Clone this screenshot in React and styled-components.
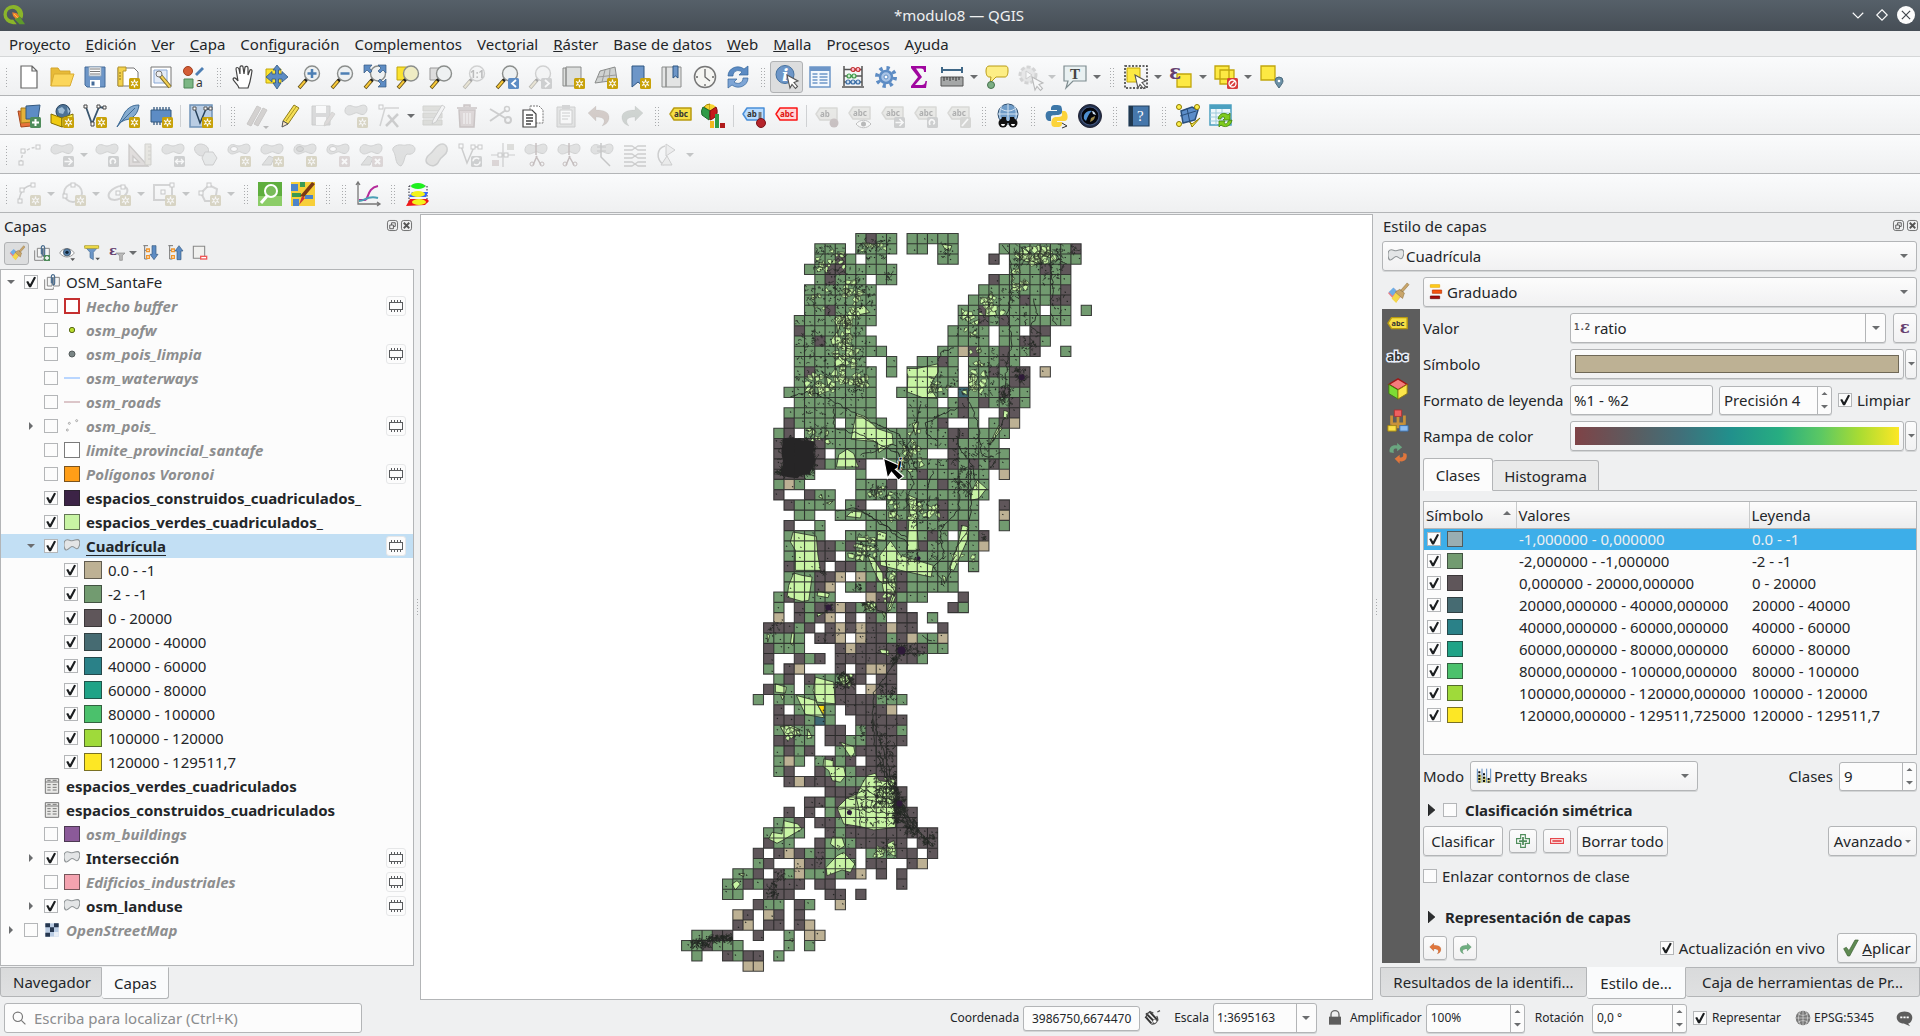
import React from "react";
import styled, { createGlobalStyle, css } from "styled-components";

/* ---------- base ---------- */

const GlobalStyle = createGlobalStyle`
  *, *::before, *::after { box-sizing: border-box; }
  body {
    margin: 0;
    background: #eff0f1;
    color: #232629;
    font: 15px/20px "Noto Sans", "Open Sans", sans-serif;
  }
  button, input, select { font: inherit; color: inherit; margin: 0; }
`;

const BORDER = "#b3b5b7";
const INK = "#4d4d4d";
const face = css`
  border: 1px solid ${BORDER};
  border-radius: 3px;
  background: linear-gradient(#fcfcfc, #f1f1f2);
  box-shadow: 0 1px 0 #d3d5d6;
`;

const Window = styled.div`
  display: flex;
  flex-direction: column;
  min-height: 100vh;
`;

/* ---------- title bar and menu ---------- */

const TitleBar = styled.header`
  display: grid;
  grid-template-columns: 1fr auto 1fr;
  align-items: center;
  height: 31px;
  padding: 0 5px 2px 3px;
  background: linear-gradient(#566069, #464e56);
  color: #eff0f1;
`;
const WindowTitle = styled.h1`
  margin: 0;
  font-size: 15px;
  font-weight: 400;
`;
const WindowButtons = styled.div`
  display: flex;
  justify-content: flex-end;
  gap: 6px;
`;
const BareButton = styled.button`
  display: inline-flex;
  align-items: center;
  justify-content: center;
  padding: 0;
  border: 0;
  background: none;
`;
const MenuBar = styled.nav`
  display: flex;
  height: 26px;
  padding-left: 1px;
  border-bottom: 1px solid #d5d7d8;
`;
const MenuItem = styled.button`
  padding: 0 7px 0 8px;
  border: 0;
  background: none;
`;

/* ---------- tool bars ---------- */

const ToolBar = styled.div`
  display: flex;
  align-items: center;
  height: 39px;
  padding-top: 2px;
  border-bottom: 1px solid ${BORDER};
  background: linear-gradient(#fafbfc, #eff0f1);
`;
const Grip = styled.span`
  width: ${(p) => (p.$first ? 12 : 16)}px;
  height: 20px;
  background: radial-gradient(circle, #a9abad 0 1px, transparent 1px) ${(p) => (p.$first ? 5 : 6)}px 0 / 3px 3px;
  background-clip: content-box;
  padding: 0 4px 0 6px;
`;
const Separator = styled.span`
  width: 1px;
  height: 22px;
  margin: 0 3px;
  background: #cfd1d3;
`;
const ToolButton = styled.button`
  display: inline-flex;
  align-items: center;
  justify-content: center;
  width: ${(p) => p.$w || 33}px;
  height: 32px;
  padding: 0;
  border: 1px solid ${(p) => (p.$on ? "#b0b2b4" : "transparent")};
  border-radius: 3px;
  background: ${(p) => (p.$on ? "#dcddde" : "none")};
  &:disabled svg { opacity: 0.36; filter: grayscale(0.7); }
`;

const Svg = ({ s = 24, children, ...rest }) => (
  <svg width={s} height={s} viewBox="0 0 24 24" fill="none" overflow="visible" aria-hidden="true" {...rest}>
    {children}
  </svg>
);

const Caret = ({ up, w = 8, c = "#6b6d6f" }) => (
  <svg width={w} height={w / 2} viewBox="0 0 8 4" aria-hidden="true">
    <path d={up ? "M0 4h8L4 0z" : "M0 0h8L4 4z"} fill={c} />
  </svg>
);

/* ---------- icon pieces ---------- */

const Star = () => (
  <g>
    <rect x="13" y="13" width="11" height="11" rx="1.5" fill="#c8a20a" />
    <path d="M18.500 14.500v8M15 16.500l7 4M22 16.500l-7 4" stroke="#fff" strokeWidth="1.300" />
    <circle cx="18.500" cy="18.500" r="1.800" fill="#c8a20a" stroke="#fff" />
  </g>
);
const Corner = ({ fill = "#8c9094", children }) => (
  <g>
    <rect x="13" y="13" width="11" height="11" rx="1.500" fill={fill} />
    {children}
  </g>
);
const Lens = ({ fill = "#eef1f2", children }) => (
  <g>
    <path d="M2 23l7-8" stroke="#5b4a13" strokeWidth="3.600" />
    <path d="M2.500 22.500l6-7" stroke="#f7c93b" strokeWidth="2" />
    <path d="M8 16l2.500-2.500" stroke="#222" strokeWidth="3" />
    <circle cx="15" cy="8.500" r="7.500" fill={fill} stroke="#8b8e8c" strokeWidth="1.400" />
    {children}
  </g>
);
const BLOB = "M2 3.500C5-.5 9 3 12 3s7-3.500 10-1c2.500 3 0 9-4 8.500-4-.5-4-2.500-7-1.500-3 1.500-6 3-8.500 1C.500 8.500.500 6 2 3.500z";
const Blob = ({ y = 0, fill = "#b9bcbb" }) => (
  <path d={BLOB} transform={`translate(0 ${y})`} fill={fill} stroke="#8a8e8c" />
);
const Tag = ({ fill = "#f6df45", stroke = "#b89a10", ink = "#333", text = "abc", y = 4 }) => (
  <g>
    <path d={`M1 ${y + 6}l4-6h17v12H5z`} fill={fill} stroke={stroke} strokeWidth="1.500" strokeLinejoin="round" />
    <text x="5" y={y + 9} fontSize="8" fontWeight="700" fontFamily="Noto Sans, sans-serif" fill={ink}>{text}</text>
  </g>
);
const Pointer = ({ x = 12, y = 11 }) => (
  <path transform={`translate(${x} ${y})`} d="M0 0l11 6-4 1.500 3.500 4-2 2-3.500-4-2 3.500z" fill="#fff" stroke="#555" strokeWidth="1.100" />
);
const Brush = () => (
  <g>
    <path d="M1 12l7-5 8 8-6 7z" fill="#e87c86" />
    <path d="M2 11l5-5 4 4-5 5z" fill="#6eaee6" />
    <path d="M5 18l5-7 5 4-5 8z" fill="#f3d84a" />
    <path d="M9 11l8 7 2-6-5-4zM15 9l7-8 2 2-7 8z" fill="#c9a56a" stroke="#8c6f3c" strokeWidth=".600" />
  </g>
);
const NodeBox = ({ x, y }) => <rect x={x} y={y} width="4" height="4" fill="#fff" stroke="#777" />;
const Undo = ({ c = "#c57b58" }) => (
  <path d="M1 9l8-7v4c8 0 14 2 13 9-1 4-4 6-7 7 4-5 3-9-6-9v4z" fill={c} stroke="#00000022" />
);
const Redo = ({ c = "#7d9f86" }) => (
  <g transform="translate(24 0) scale(-1 1)"><Undo c={c} /></g>
);
const Epsilon = ({ x = 3, y = 15, size = 19 }) => (
  <text x={x} y={y} fontSize={size} fontFamily="DejaVu Serif, serif" fontWeight="700" fill="#65406f">ε</text>
);

const I = {
  file: <path d="M4 1h11l5 5v17H4zM15 1v5h5" fill="#fff" stroke="#666" strokeWidth="1.200" />,
  open: <><path d="M1 21V3h7l2 3h10v4" fill="#e8bb38" stroke="#d3a52c" /><path d="M1 21L4 9h20l-4 12z" fill="#fbd65b" stroke="#d9ab31" /></>,
  save: <><path d="M2 2h20v20H4l-2-2z" fill="#6d96c8" stroke="#446b98" /><path d="M6 2h12v9H6z" fill="#fff" stroke="#9ab" /><path d="M7 4h10M7 6.500h10M7 9h10" stroke="#777" /><path d="M7 15h10v7H7z" fill="#fff" /><path d="M8.500 16.500h3v4h-3z" fill="#446b98" /></>,
  layout: <><path d="M2 3h16l4 4v14H2z" fill="#fff" stroke="#777" /><path d="M2 2h8v4H7v15H2z" fill="#f3d24c" stroke="#b4932a" /><path d="M3 8h2M3 11h2M3 14h2" stroke="#8d7220" /><Star /></>,
  manager: <><path d="M2 2h20v20H2z" fill="#fff" stroke="#777" /><path d="M5 5h13v13H5z" fill="#e4ecf8" stroke="#89a8d6" /><path d="M10 9l11 13" stroke="#7b6a2a" strokeWidth="4" /><path d="M12 11l9 11" stroke="#f2cf54" strokeWidth="2" /><circle cx="10" cy="9" r="3" fill="#eee" stroke="#777" /></>,
  style: <><circle cx="6" cy="6" r="4.500" fill="#d45d36" stroke="#a13f1f" /><path d="M13 9l7-7 2 2-7 7z" fill="#4d7fb4" /><path d="M2 14h9v9H2z" fill="#7cb784" stroke="#4d8557" /><text x="14" y="22" fontSize="12" fill="#333" fontFamily="Noto Sans, sans-serif">a</text></>,
  hand: <path d="M8 23c-1-4-6-7-6-9 1-2 3-1 5 2L5 4c0-2 2-2 3 0l1 5V2c1-2 3-1 3 0l1 7 1-7c1-1 3-1 3 1v7l2-5c1-1 2 0 2 1-1 5-1 9-4 17z" fill="#fff" stroke="#444" strokeWidth="1.200" />,
  pan: <><path d="M2 4h15v14H2z" fill="#fbe32f" stroke="#c1a60d" /><path d="M13 0l4 5h-2.500v4H18v-2.500l6 5.500-6 5v-3h-3.500v4H17l-4 6-4-6h2.500v-4H8v3l-6-5 6-5.500V9h3.500V5H9z" fill="#5d8cc4" stroke="#33587f" strokeWidth=".800" /></>,
  zoomIn: <Lens><path d="M15 4v9M10.500 8.500h9" stroke="#4d7fb4" strokeWidth="2.500" /></Lens>,
  zoomOut: <Lens><path d="M10.500 8.500h9" stroke="#4d7fb4" strokeWidth="2.500" /></Lens>,
  zoomFull: <><Lens /><path d="M1 0h8L6.500 3 9 6 7 8 4 5 1 8zM23 0v8l-3-3-3 3-2-2 3-3-3-3zM23 22h-8l3-3-3-3 2-2 3 3 3-3z" fill="#5d8cc4" stroke="#33587f" strokeWidth=".700" /></>,
  zoomSel: <><path d="M1 2h12v13H1z" fill="#fbe32f" stroke="#c1a60d" /><Lens fill="#efecc4" /></>,
  zoomLayer: <><path d="M1 3h12v12H1z" fill="#ddd" stroke="#999" /><Lens /></>,
  zoomNative: <Lens><text x="8" y="13" fontSize="10" fontWeight="700" fill="#555" fontFamily="Noto Sans, sans-serif">1:1</text></Lens>,
  zoomLast: <><Lens /><Corner fill="#5d8cc4"><path d="M21 15l-4 3.500 4 3.500" stroke="#fff" strokeWidth="1.800" /></Corner></>,
  zoomNext: <><Lens /><Corner><path d="M17 15l4 3.500-4 3.500" stroke="#fff" strokeWidth="1.800" /></Corner></>,
  mapView: <><path d="M2 3h3v18H2zM5 2h15v19H5z" fill="#dcdedd" stroke="#8a8c8b" /><Star /></>,
  map3d: <><path d="M6 6l15-4 2 13-22 3z" fill="#cfd2d1" stroke="#8a8c8b" /><path d="M4 12l18-2M11 5L8 17M16 4l-1 12" stroke="#999" /><Star /></>,
  bookmarkNew: <><path d="M5 1h12v21l-6-5-6 5z" fill="#6d96c8" stroke="#2e5682" /><Star /></>,
  bookmark: <><path d="M2 2h4v20H2zM6 2h15v20H6z" fill="#e3e4e4" stroke="#8a8c8b" /><path d="M13 1h5v12l-2.500-2L13 13z" fill="#6d96c8" stroke="#2e5682" /></>,
  clock: <><circle cx="12" cy="12" r="10.500" fill="#f5f5f2" stroke="#777" strokeWidth="1.500" /><path d="M12 4v8l5 4M3 12h2M19 12h2M12 19v2" stroke="#666" strokeWidth="1.300" /></>,
  refresh: <><path d="M2 11C2 3 12-1 18 4l4-3v9h-9l3-3C12 4 7 6 7 11z" fill="#5d8cc4" stroke="#33659c" strokeWidth=".700" /><path d="M22 13c0 8-10 12-16 7l-4 3v-9h9l-3 3c4 3 9 1 9-4z" fill="#7ea5d5" stroke="#33659c" strokeWidth=".700" /></>,
  identify: <><circle cx="10" cy="9.500" r="9" fill="#6d96c8" stroke="#44719f" /><text x="7" y="15.500" fontSize="17" fontWeight="700" fontStyle="italic" fontFamily="DejaVu Serif, serif" fill="#fff">i</text><Pointer x={12} y={10} /></>,
  table: <><path d="M2 2h20v20H2z" fill="#f4f8fd" stroke="#6d96c8" strokeWidth="1.500" /><path d="M2 2h20v4H2z" fill="#6d96c8" /><path d="M4.500 9h5M4.500 12h5M4.500 15h5M4.500 18h5M11.500 9h8M11.500 12h8M11.500 15h8M11.500 18h8" stroke="#6d96c8" strokeWidth="1.300" /></>,
  abacus: <><path d="M3 1v20M21 1v20M1 22h22M3 4.500h18M3 11h18M3 17h18" stroke="#555" strokeWidth="1.500" /><g strokeWidth="1.200"><path d="M10 4.500a2 2 0 104 0 2 2 0 10-4 0M15 4.500a2 2 0 104 0 2 2 0 10-4 0" fill="#fbc" stroke="#c03030" /><path d="M6 11a2 2 0 104 0 2 2 0 10-4 0M11 11a2 2 0 104 0 2 2 0 10-4 0" fill="#cec" stroke="#3f9a48" /><path d="M5 17a2 2 0 104 0 2 2 0 10-4 0M10 17a2 2 0 104 0 2 2 0 10-4 0M15 17a2 2 0 104 0 2 2 0 10-4 0" fill="#cde" stroke="#3b6fa8" /></g></>,
  gear: <><circle cx="12" cy="12" r="9" stroke="#5d8cc4" strokeWidth="4" strokeDasharray="3.200 3.900" /><circle cx="12" cy="12" r="6" fill="#a9c4e6" stroke="#5d8cc4" strokeWidth="2.500" /><circle cx="12" cy="12" r="2" fill="#fff" stroke="#5d8cc4" /></>,
  sigma: <path d="M4 1h15v6h-2c0-3-1-3.500-3-3.500H9l6 8.500-7 8h6c3 0 4-1 4.500-4H20l-1 7H4v-2l7-9L4 3z" fill="#a0069f" />,
  measure: <><path d="M2 5h20M2 2v6M22 2v6" stroke="#3f6787" strokeWidth="2" /><path d="M1 12h22v9H1z" fill="#a5a7a7" stroke="#555" /><path d="M4 12v4M7 12v3M10 12v4M13 12v3M16 12v4M19 12v3" stroke="#333" /></>,
  tips: <><path d="M4 1h16c3 0 3 2 3 5s-1 6-3 6h-9l-6 6 1-6H4c-2 0-3-3-3-6s1-5 3-5z" fill="#fdee85" stroke="#b99b14" /><circle cx="6" cy="20" r="3.500" fill="#7cae84" stroke="#47724e" /></>,
  action: <><circle cx="10" cy="10" r="8" fill="#ccc" stroke="#999" strokeWidth="3" strokeDasharray="4 2" /><path d="M8 6l6 4-6 4z" fill="#fff" stroke="#888" /><Pointer x={14} y={12} /></>,
  annotation: <><path d="M1 1h22v15H10l-7 7 2-7H1z" fill="#e9f1f2" stroke="#7e8c8f" strokeWidth="1.200" /><text x="7" y="14" fontSize="15" fontFamily="Liberation Serif, serif" fontWeight="700" fill="#444">T</text></>,
  select: <><path d="M1 1h22v22H1z" stroke="#333" strokeDasharray="2 1.500" strokeWidth="1.500" /><path d="M3 3h13v14H3z" fill="#fde943" stroke="#c1a60d" /><Pointer x={11} y={10} /></>,
  selectExpr: <><path d="M8 9h14v13H8z" fill="#fde943" stroke="#c1a60d" strokeWidth="1.300" /><Epsilon x={0} y={14} size={20} /></>,
  deselect: <><path d="M1 1h14v13H1zM6 5h14v14H6z" fill="#fde943" stroke="#c1a60d" strokeWidth="1.300" /><rect x="13" y="13" width="11" height="11" rx="1.500" fill="#d83c3c" /><circle cx="18.500" cy="18.500" r="3.500" stroke="#fff" strokeWidth="1.300" /><path d="M16 21l5-5" stroke="#fff" strokeWidth="1.300" /></>,
  selectLoc: <><path d="M2 1h14v14H2z" fill="#fde943" stroke="#c1a60d" strokeWidth="1.300" /><path d="M20 23c-2-3-4-5-4-7a4 4 0 018 0c0 2-2 4-4 7z" fill="#6b90a6" stroke="#4c6b7d" /><circle cx="20" cy="16" r="1.300" fill="#fff" /></>,

  addLayer: <><path d="M1 7l11 1 2 14-10 1z" fill="#e8743b" stroke="#a5441b" /><path d="M4 4h12v14l-12 1z" fill="#e5b13a" stroke="#a57a1b" /><path d="M9 2l14-1-2 14H9z" fill="#5d8cc4" stroke="#33587f" /><Corner fill="#4f8c5b"><path d="M18.500 15v7M15 18.500h7" stroke="#fff" strokeWidth="2" /></Corner></>,
  geopackage: <><circle cx="13" cy="7.500" r="7" fill="#4d7296" stroke="#2b4661" /><path d="M8 5l4-2 3 3-2 4-4-1zM17 3l3 4-2 3z" fill="#9dbcd6" /><path d="M1 10l11 4v9L1 19z" fill="#f0cb12" stroke="#856f00" /><path d="M12 14l11-4v9l-11 4z" fill="#fdf04c" stroke="#856f00" /><Star /></>,
  shape: <><path d="M3 3l6 17L16 3l6 1" stroke="#39556e" strokeWidth="1.800" /><path d="M1 1h3v3H1zM14 1h3v3h-3zM20 2h3v3h-3zM8 18h3v4H8z" fill="#fff" stroke="#444" /><Star /></>,
  feather: <><path d="M1 23L9 8c4-5 8-7 14-7-1 9-6 14-14 15l-4 2z" fill="#85abcf" stroke="#3e6b96" /><path d="M3 20L19 4" stroke="#3e6b96" /><Star /></>,
  memory: <><path d="M5 3v18M8 3v18M11 3v18M14 3v18M17 3v18M20 3v18" stroke="#33587f" strokeWidth="1.300" /><path d="M2 6h20v12H2z" fill="#5d8cc4" stroke="#33587f" /><Star /></>,
  virtual: <><path d="M1 1h22v22H1z" fill="#b9cde4" stroke="#6f93b8" strokeWidth="1.500" /><path d="M6 5l5 14 6-14h4" stroke="#27425c" strokeWidth="1.500" /><path d="M4 3h3v3H4zM15 3h3v3h-3zM20 3h3v3h-3z" fill="#fff" stroke="#555" /><Star /></>,
  pencils: <><path d="M2 20L12 2l4 2L6 22zM9 20l9-16 4 2-9 16z" fill="#a98f80" stroke="#8a7568" /><path d="M18 22h6l-3 3z" fill="#555" /></>,
  pencil: <><path d="M5 17L16 1l5 3L10 20z" fill="#f5df57" stroke="#8f7d1c" /><path d="M5 17l-1 6 6-3z" fill="#f7e5c8" stroke="#555" /><path d="M8 17L18 3" stroke="#b09c22" /></>,
  saveEdit: <><path d="M1 2h18v19H1z" fill="#aaa" stroke="#888" /><path d="M5 2h10v7H5zM5 13h10v8H5z" fill="#fff" /><path d="M14 18l7-10 3 2-7 10-4 2z" fill="#c9a9a0" stroke="#998" /></>,
  addPoly: <><Blob /><Star /></>,
  vertex: <><path d="M3 22L8 4h14" stroke="#999" strokeWidth="1.500" /><NodeBox x={2} y={1} /><path d="M9 22l12-12M11 11l10 12" stroke="#888" strokeWidth="2.500" /></>,
  attrs: <><path d="M1 2h19v5H1zM1 9h19v5H1zM1 16h19v5H1z" fill="#b6b79b" stroke="#99997f" /><path d="M11 16L20 1l3 2-9 15-4 2z" fill="#eee" stroke="#888" /></>,
  trash: <><path d="M2 4h20M4 6h16l-1 17H5zM9 3V1h6v2" fill="#d49a9a" stroke="#a06868" strokeWidth="1.500" /><path d="M9 9v11M12 9v11M15 9v11" stroke="#fff" /></>,
  cut: <><path d="M2 5l15 9M2 17L18 6" stroke="#888" strokeWidth="2" /><circle cx="20" cy="16" r="3" stroke="#888" strokeWidth="2" /><circle cx="19" cy="5" r="2.500" stroke="#888" strokeWidth="1.500" /></>,
  copy: <><path d="M9 2h9l4 4v13H9z" fill="#fff" stroke="#777" strokeDasharray="2 1" /><path d="M2 6h9l4 4v13H2z" fill="#fff" stroke="#444" strokeWidth="1.200" /><path d="M5 11h7M5 14h7M5 17h7M5 20h5" stroke="#444" strokeWidth="1.300" /></>,
  paste: <><path d="M3 3h18v20H3z" fill="#c4c8c4" stroke="#888" /><path d="M6 6h12v14H6z" fill="#fff" stroke="#888" /><path d="M8 1h8v4H8z" fill="#999" /><path d="M8 9h8M8 12h8M8 15h6" stroke="#888" /></>,
  undo: <Undo />,
  redo: <Redo />,
  label: <Tag />,
  diagram: <><path d="M8 7V0A8 8 0 002 3z" fill="#f7d531" stroke="#a28500" /><path d="M8 7l6-4a8 8 0 00-6-3z" fill="#f7d531" /><path d="M8 7L1 3a9 9 0 00-1 8l7 5z" fill="#2f9b47" stroke="#1c6a2d" /><path d="M8 7l6-4c3 6 0 11-6 13z" fill="#c41b1b" stroke="#7c0d0d" /><path d="M8 17h4v7H8z" fill="#f3b71f" /><path d="M13 10h4v14h-4z" fill="#2f9b47" /><path d="M18 19h5v5h-5z" fill="#b01c1c" /></>,
  labelPin: <><Tag fill="#b9dcff" stroke="#4a8fd8" text="ab" /><path d="M18 8v8" stroke="#777" strokeWidth="3" /><circle cx="19" cy="19" r="4.500" fill="#b5242b" stroke="#7b1217" /></>,
  labelRed: <Tag fill="#ffd6d6" stroke="#fb1515" ink="#e01010" />,
  labelShow: <><Tag y={3} fill="#d5d2b8" stroke="#aaa68a" /><path d="M8 20c4-5 11-5 15 0-4 5-11 5-15 0z" fill="#fff" stroke="#666" /><circle cx="15.500" cy="20" r="2.500" fill="#555" /></>,
  labelMove: <><Tag y={3} fill="#d5d2b8" stroke="#aaa68a" /><Corner><path d="M14.500 18.500h7M18.500 15l3.500 3.500-3.500 3.500" stroke="#fff" strokeWidth="1.600" /></Corner></>,
  labelRotate: <><Tag y={3} fill="#d5d2b8" stroke="#aaa68a" /><Corner><path d="M16 21c-2-4 1-6 3-5s2 4 0 4" stroke="#fff" strokeWidth="1.600" /></Corner></>,
  labelEdit: <><Tag y={3} fill="#d5d2b8" stroke="#aaa68a" /><Corner fill="#a5a48c"><path d="M15 22l6-7" stroke="#fff" strokeWidth="1.800" /></Corner></>,
  labelPinOff: <><Tag fill="#d5d2b8" stroke="#aaa68a" text="ab" /><circle cx="19" cy="19" r="4.500" fill="#a96065" /></>,
  metasearch: <><circle cx="12" cy="10" r="10" fill="#6f9cc8" stroke="#31506f" /><path d="M2 10h20M12 0v20M4 4c5 4 11 4 16 0M6 1c-3 6-3 12 0 18M18 1c3 6 3 12 0 18" stroke="#d5e4f2" /><circle cx="7" cy="19" r="4.500" fill="#111" /><circle cx="17" cy="19" r="4.500" fill="#111" /><path d="M6 13h4v4h4v-4h4l1 6H5z" fill="#111" /><path d="M5 20a2 2 0 104 0M15 20a2 2 0 104 0" fill="#fff" /></>,
  python: <><path d="M11 1c-5 0-5 2-5 5h6v1H4c-5 0-4 10 0 10h2v-4c0-3 7-1 10-3 2-2 1-6 0-8-1-1-3-1-5-1z" fill="#3d77a8" /><path d="M12 23c5 0 5-2 5-5h-5v-1h8c4 0 3-9 0-10h-3v4c0 3-7 1-9 3-2 2-2 6-1 8 1 1 3 1 5 1z" fill="#fbd33b" /><path d="M17 19l5 3-5 2" stroke="#333" /></>,
  earth: <><circle cx="12" cy="12" r="11.500" fill="#20304c" stroke="#223" /><circle cx="12" cy="12" r="9" fill="#04060c" stroke="#41547c" strokeWidth="1.200" /><path d="M6 15c-1-5 3-9 8-8-3 2-4 5-6 10z" fill="#4f8fd0" /><path d="M12 18c3-1 5-3 5-6l-4 2z" fill="#9d8a4a" /><path d="M14 7c2 0 3 2 4 4l-3-1z" fill="#cfe0f2" /></>,
  help: <><path d="M2 2h20v20H2z" fill="#4677ab" stroke="#24415e" strokeWidth="1.200" /><path d="M2 2h4v20H2z" fill="#20384f" /><text x="10" y="17" fontSize="15" fontFamily="Liberation Serif, serif" fill="#fff">?</text></>,
  topology: <><path d="M5 7l11-4 6 3-3 10-12 3z" fill="#5c8dc9" stroke="#284d7a" strokeWidth="1.500" /><path d="M4 12l16-5M11 4l3 15" stroke="#284d7a" /><g fill="#fdf04c" stroke="#8d7a00"><circle cx="3" cy="3" r="2.500" /><circle cx="21" cy="3" r="2.500" /><circle cx="3" cy="20" r="2.500" /><path d="M14 18l2 5 8-9-8 6z" /></g></>,
  tableSync: <><path d="M1 1h21v20H1z" fill="#eef7fb" stroke="#4ba0c0" strokeWidth="1.500" /><path d="M1 3h21" stroke="#4ba0c0" strokeWidth="4" /><path d="M1 9h21M1 13h21M1 17h21M7 5v16M13 5v16" stroke="#9ccadb" /><path d="M9 15c1-6 7-7 10-4l2-2v7h-7l2-2c-2-2-4-1-4 1z" fill="#7ecb1e" stroke="#43830a" strokeWidth=".800" /><path d="M23 16c-1 7-8 8-11 5l-2 2v-6h6l-1 2c2 2 4 0 4-2z" fill="#7ecb1e" stroke="#43830a" strokeWidth=".800" /></>,

  curve: <><path d="M4 20c0-9 4-15 17-16" stroke="#888" strokeWidth="1.500" strokeDasharray="3 2" /><NodeBox x={19} y={2} /><NodeBox x={2} y={18} /><NodeBox x={4} y={6} /></>,
  blobMove: <><Blob /><Corner><path d="M14.500 18.500h7M18.500 15l3.500 3.500-3.500 3.500" stroke="#fff" strokeWidth="1.600" /></Corner></>,
  blobRotate: <><Blob /><Corner><path d="M16 21c-2-4 1-6 3-5s2 4 0 4" stroke="#fff" strokeWidth="1.600" /></Corner></>,
  triangle: <><path fillRule="evenodd" d="M1 2v21h19zM5 13v6h6z" fill="#cdb2a6" stroke="#94776a" strokeWidth="1.300" /><path d="M17 1h6v21h-6z" fill="#d6c99c" stroke="#998f70" /><path d="M20 4h3M20 8h3M20 12h3M20 16h3" stroke="#998f70" /></>,
  blobScale: <><Blob /><Corner><path d="M15 18.500h7M17 16l-2.500 2.500L17 21M20 16l2.500 2.500L20 21" stroke="#fff" strokeWidth="1.300" /></Corner></>,
  simplify: <><path d="M1 4c3-5 11-3 13 1s-2 8-6 8-9-5-7-9z" fill="#bbb" stroke="#888" /><path d="M11 9h8l4 6-4 7h-8l-3-7z" fill="#ccd4d4" stroke="#888" /></>,
  ringAdd: <><Blob /><ellipse cx="7" cy="6" rx="3.500" ry="2.500" fill="#fff" stroke="#888" /><Star /></>,
  partAdd: <><Blob /><path d="M2 22l7-9 5 2-3 7z" fill="#b9bcbb" stroke="#8a8e8c" /><Star /></>,
  ringFill: <><Blob /><ellipse cx="7" cy="6" rx="3.500" ry="2.500" fill="#9aa19d" stroke="#777" /><Star /></>,
  ringDel: <><Blob /><ellipse cx="7" cy="6" rx="3.500" ry="2.500" fill="#fff" stroke="#888" /><Corner fill="#d49a9a"><path d="M16 16l5 5M21 16l-5 5" stroke="#fff" strokeWidth="2" /></Corner></>,
  partDel: <><Blob /><path d="M2 22l7-9 5 2-3 7z" fill="#b9bcbb" stroke="#8a8e8c" /><Corner fill="#d49a9a"><path d="M16 16l5 5M21 16l-5 5" stroke="#fff" strokeWidth="2" /></Corner></>,
  reshape: <path d="M2 4c5-4 9-1 12-2s9 0 9 4-4 6-8 5c-3 2-2 8-6 12-5-1-5-7-6-11s-4-5-1-8z" fill="#b9bcbb" stroke="#8a8e8c" />,
  offset: <path d="M14 2c5-3 9 1 8 6s-6 5-8 10-7 6-11 3-1-8 2-10 5-7 9-9z" fill="#c7c4b6" stroke="#8a8e8c" strokeWidth="1.500" />,
  vertexSync: <><path d="M3 3l6 17L16 4h6" stroke="#888" strokeWidth="1.500" /><NodeBox x={1} y={1} /><NodeBox x={13} y={2} /><NodeBox x={20} y={2} /><Corner><circle cx="18.500" cy="18.500" r="3.500" stroke="#fff" strokeWidth="1.500" strokeDasharray="8 3" /></Corner></>,
  cross: <><path d="M0 12h24M12 0v24" stroke="#888" strokeWidth="1.200" /><NodeBox x={7} y={10} /><NodeBox x={13} y={10} /><path d="M1 17h7v6H1z" fill="#d49a9a" /><path d="M16 1h7v6h-7z" fill="#b5b09a" /></>,
  split: <><Blob /><path d="M12 0v12M9 22l4-9M17 22l-5-9" stroke="#955" strokeWidth="1.500" /><circle cx="8" cy="21" r="2" stroke="#955" /><circle cx="18" cy="21" r="2" stroke="#955" /></>,
  splitPart: <><Blob /><path d="M11 0v14l9 9" stroke="#777" strokeWidth="1.500" /><path d="M7 4h9M7 8h9" stroke="#777" /></>,
  mergeAttr: <path d="M1 3h8l3 2 3-2h8M1 7h8l3-2 3 2h8M1 11h8l3 2 3-2h8M1 15h8l3-2 3 2h8M1 19h8l3 2 3-2h8M1 23h8l3-2 3 2h8" stroke="#888" strokeWidth="1.300" />,
  rotateSym: <><path d="M8 22C-1 16 1 5 9 3" stroke="#888" strokeWidth="1.500" /><path d="M10 1l9 6-9 6zM5 22l6-9 5 9z" fill="#ddd" stroke="#888" /></>,

  arc: <><path d="M2 19C3 9 7 4 16 3" stroke="#888" strokeWidth="1.500" /><NodeBox x={14} y={1} /><NodeBox x={3} y={6} /><NodeBox x={1} y={17} /><Star /></>,
  circle: <><circle cx="11" cy="11" r="9" stroke="#999" strokeWidth="2" /><NodeBox x={9} y={1} /><NodeBox x={1} y={12} /><Star /></>,
  ellipse: <><ellipse cx="11" cy="11" rx="10" ry="6" stroke="#999" strokeWidth="2" transform="rotate(-25 11 11)" /><NodeBox x={9} y={9} /><NodeBox x={14} y={3} /><Star /></>,
  rect: <><path d="M2 3h18v15H2z" stroke="#999" strokeWidth="2" /><NodeBox x={9} y={8} /><NodeBox x={18} y={1} /><Star /></>,
  polygon: <><path d="M4 11l8-8 8 4-2 12H8z" stroke="#999" strokeWidth="2" /><NodeBox x={10} y={1} /><NodeBox x={2} y={9} /><Star /></>,
  finder: <><path d="M0 0h24v24H0z" fill="#5fae3e" /><path d="M0 14h24v10H0z" fill="#8ccd68" /><circle cx="13" cy="9" r="6" fill="#79bb5a" stroke="#fff" strokeWidth="2" /><path d="M9 14l-6 7" stroke="#fff" strokeWidth="3" /></>,
  quickmap: <><path d="M0 0h24v24H0z" fill="#f7cf39" /><path d="M0 2h7v7H0zM2 17h6v7H2zM14 13h8v4h-8z" fill="#4d84c9" /><path d="M1 11h9v4H1zM9 0h5v5H9z" fill="#3a9a52" /><path d="M9 14L21 0l3 2-11 13z" fill="#7a3a15" /><path d="M8 23l3-9 3 2z" fill="#c33" /></>,
  plot: <><path d="M2 1v21h21M0 3l2-3 2 3M21 20l3 2-3 2" stroke="#777" strokeWidth="1.300" /><path d="M3 18h6c4-1 2-12 13-14" stroke="#b52a9a" strokeWidth="2" /><path d="M3 19c6 0 8-6 19-3" stroke="#4a9fb5" strokeWidth="2" /></>,
  stack: <><path d="M4 4h18v17H4z" stroke="#223" strokeDasharray="1.500 1.500" /><ellipse cx="13" cy="4" rx="7" ry="3" fill="#1ef01e" /><path d="M1 24l4-7h17l2 2-4 4z" fill="#f01818" /><path d="M4 15l3-5h16l-2 5z" fill="#36f" /><ellipse cx="13" cy="12" rx="7" ry="3" fill="#f3f31b" /><ellipse cx="14" cy="20" rx="7" ry="3" fill="#f3f31b" /></>,

  brush: <Brush />,
  group: <><path d="M1 8v15h13v-3" stroke="#888" strokeWidth="1.500" /><path d="M5 5h7v13H5zM14 5h9v13h-9z" fill="#f4f5f5" stroke="#888" strokeWidth="1.500" /><path d="M11 14V4c0-4 5-4 5 0v10c0 3-3 3-3 0V5" stroke="#44688b" strokeWidth="1.700" /></>,
  groupAdd: <><path d="M1 8v15h13v-3" stroke="#888" strokeWidth="1.500" /><path d="M5 5h7v13H5zM14 5h9v13h-9z" fill="#f4f5f5" stroke="#888" strokeWidth="1.500" /><path d="M11 14V4c0-4 5-4 5 0v10c0 3-3 3-3 0V5" stroke="#44688b" strokeWidth="1.700" /><rect x="15" y="15" width="9" height="9" fill="#4f8c5b" /><path d="M19.500 16.500v6M16.500 19.500h6" stroke="#fff" strokeWidth="2" /></>,
  eye: <><path d="M1 12C6 3 17 3 23 12 17 20 7 20 1 12z" fill="#fff" stroke="#999" strokeWidth="1.500" /><circle cx="12" cy="11" r="5.500" fill="#547fa9" stroke="#345" /><circle cx="12" cy="11" r="2.500" fill="#123" /><path d="M17 20h7l-3.500 4z" fill="#555" /></>,
  funnel: <><path d="M1 2h21l-8 9v11l-5-3v-8z" fill="#6d96c8" stroke="#466d94" /><path d="M1 1h21v4H1z" fill="#f4e04d" stroke="#a9971d" /><path d="M17 19h7l-3.500 4z" fill="#555" /></>,
  exprFilter: <><Epsilon x={0} y={15} size={20} /><path d="M11 12h13l-4 4v7h-4v-7z" fill="#bbb" stroke="#888" /></>,
  expand: <><path d="M2 1h7M4 1v20h4M4 8h4" stroke="#777" strokeWidth="1.500" /><path d="M7 6h4v4H7zM7 16h4v4H7z" fill="#fff" stroke="#f0962e" strokeWidth="2" /><path d="M15 1h6v13h3l-6 8-6-8h3z" fill="#5d8cc4" stroke="#33587f" /></>,
  collapse: <><path d="M2 1h7M4 1v20h4M4 8h4" stroke="#777" strokeWidth="1.500" /><path d="M7 6h4v4H7zM7 16h4v4H7z" fill="#fff" stroke="#f0962e" strokeWidth="2" /><path d="M15 22h6V9h3l-6-8-6 8h3z" fill="#5d8cc4" stroke="#33587f" /></>,
  removeLayer: <><path d="M2 2h17v18H2z" fill="#f0f0ee" stroke="#888" strokeWidth="1.600" /><path d="M12 16h11v6H12z" fill="#ef5858" /><path d="M14 19h7" stroke="#fff" strokeWidth="2" /></>,
};

const GREY = true;
const BARS = [
  [
    "grip1", ["file"], ["open"], ["save"], ["layout"], ["manager"], ["style"], "grip",
    ["hand"], ["pan"], ["zoomIn"], ["zoomOut"], ["zoomFull"], ["zoomSel"], ["zoomLayer"], ["zoomNative", GREY],
    ["zoomLast"], ["zoomNext", GREY], ["mapView"], ["map3d"], ["bookmarkNew"], ["bookmark"], ["clock"], ["refresh"], "grip",
    ["identify", false, true], ["table"], ["abacus"], ["gear"], ["sigma"], ["measure"], "v", ["tips"],
    ["action", GREY], "vg", ["annotation"], "v", "grip", ["select"], "v", ["selectExpr"], "v", ["deselect"], "v", ["selectLoc"],
  ],
  [
    "grip1", ["addLayer"], ["geopackage"], ["shape"], ["feather"], ["memory"], "|", ["virtual"], "|", "grip",
    ["pencils", GREY], ["pencil"], ["saveEdit", GREY], ["addPoly", GREY], ["vertex", GREY], "v", ["attrs", GREY], ["trash", GREY],
    ["cut", GREY], ["copy"], ["paste", GREY], ["undo", GREY], ["redo", GREY], "grip",
    ["label"], ["diagram"], "|", ["labelPin"], ["labelRed"], "|", ["labelPinOff", GREY], ["labelShow", GREY], ["labelMove", GREY],
    ["labelRotate", GREY], ["labelEdit", GREY], "grip", ["metasearch"], "grip", ["python"], ["earth"], "grip", ["help"], "grip",
    ["topology"], ["tableSync"],
  ],
  [
    "grip1", ["curve", GREY], ["blobMove", GREY], "vg", ["blobRotate", GREY], ["triangle", GREY], ["blobScale", GREY],
    ["simplify", GREY], ["ringAdd", GREY], ["partAdd", GREY], ["ringFill", GREY], ["ringDel", GREY], ["partDel", GREY],
    ["reshape", GREY], ["offset", GREY], ["vertexSync", GREY], ["cross", GREY], ["split", GREY], ["split", GREY],
    ["splitPart", GREY], ["mergeAttr", GREY], ["rotateSym", GREY], "vg",
  ],
  [
    "grip1", ["arc", GREY], "vg", ["circle", GREY], "vg", ["ellipse", GREY], "vg", ["rect", GREY], "vg", ["polygon", GREY], "vg",
    "grip", ["finder"], ["quickmap"], "grip", "grip", ["plot"], "grip", ["stack"],
  ],
];

const Bar = ({ items }) => (
  <ToolBar role="toolbar">
    {items.map((it, i) => {
      if (it === "grip1" || it === "grip") return <Grip key={i} $first={it === "grip1"} />;
      if (it === "|") return <Separator key={i} />;
      if (it === "v" || it === "vg")
        return <ToolButton key={i} $w={12} aria-label="Más"><Caret c={it === "v" ? "#6b6d6f" : "#c3c5c6"} /></ToolButton>;
      return (
        <ToolButton key={i} disabled={it[1]} $on={it[2]} aria-label={it[0]}>
          <Svg>{I[it[0]]}</Svg>
        </ToolButton>
      );
    })}
  </ToolBar>
);

/* ---------- shared controls ---------- */

const Check = styled.input.attrs({ type: "checkbox" })`
  appearance: none;
  flex: none;
  width: 14px;
  height: 14px;
  border: 1px solid #b4b6b8;
  background: #fcfcfc;
  &:checked::before {
    content: "";
    display: block;
    width: 12px;
    height: 12px;
    background: #1b1e20;
    clip-path: polygon(10% 48%, 26% 42%, 42% 68%, 76% 6%, 92% 12%, 50% 94%, 34% 94%);
  }
`;
const Swatch = styled.span`
  flex: none;
  width: ${(p) => p.$size || 16}px;
  height: ${(p) => p.$size || 16}px;
  border: ${(p) => (p.$line ? 2 : 1)}px solid ${(p) => p.$line || "rgba(35, 35, 35, 0.6)"};
  background: ${(p) => p.$fill};
`;
const PushButton = styled.button`
  ${face}
  display: inline-flex;
  align-items: center;
  justify-content: center;
  gap: 3px;
  width: ${(p) => (p.$w ? `${p.$w}px` : "auto")};
  height: ${(p) => p.$h || 30}px;
  padding: 0;
`;
const Combo = styled.div`
  ${face}
  display: flex;
  align-items: center;
  gap: 2px;
  height: 30px;
  width: ${(p) => (p.$w ? `${p.$w}px` : "auto")};
  flex: ${(p) => (p.$grow ? 1 : "none")};
  padding: 0 8px 0 5px;
  ${(p) => p.$plain && css`background: #fcfcfc; padding: 0 0 0 3px;`}
`;
const Select = styled.select`
  appearance: none;
  flex: 1;
  min-width: 0;
  height: 100%;
  padding: 0;
  border: 0;
  background: none;
  font-size: ${(p) => (p.$small ? 12 : 15)}px;
`;
const DropPart = styled.span`
  display: flex;
  align-items: center;
  justify-content: center;
  align-self: stretch;
  width: 20px;
  border-left: 1px solid ${BORDER};
`;
const SpinBox = styled.div`
  ${face}
  display: flex;
  width: ${(p) => p.$w}px;
  height: 29px;
  background: #fcfcfc;
`;
const TextInput = styled.input`
  flex: 1;
  min-width: 0;
  padding: 0 0 0 4px;
  border: 0;
  background: none;
`;
const SpinArrows = styled.div`
  display: grid;
  grid-template-rows: 1fr 1fr;
  width: 14px;
  border-left: 1px solid ${BORDER};
`;
const Spin = ({ w, value, label, id }) => (
  <SpinBox $w={w}>
    <TextInput id={id} defaultValue={value} aria-label={label} />
    <SpinArrows>
      <BareButton aria-label={`${label} más`}><Caret up w={7} /></BareButton>
      <BareButton aria-label={`${label} menos`}><Caret w={7} /></BareButton>
    </SpinArrows>
  </SpinBox>
);

/* ---------- docks ---------- */

const Main = styled.main`
  display: flex;
  flex: 1;
`;
const Dock = styled.section`
  display: flex;
  flex-direction: column;
  width: ${(p) => p.$w}px;
  flex: none;
`;
const DockHead = styled.header`
  display: flex;
  align-items: center;
  height: 27px;
  padding: 0 2px 2px ${(p) => p.$left || 4}px;
  gap: 3px;
  & h2 { flex: 1; margin: 0; font-size: 15px; font-weight: 400; }
`;
const DockButtons = () => (
  <>
    <BareButton aria-label="Flotar">
      <Svg s={11}><rect x="1" y="1" width="22" height="22" rx="5" stroke="#666" strokeWidth="2" /><path d="M6 11h8v8H6zM10 11V6h8v8h-4" stroke="#555" strokeWidth="2" /></Svg>
    </BareButton>
    <BareButton aria-label="Cerrar">
      <Svg s={11}><rect x="1" y="1" width="22" height="22" rx="5" stroke="#666" strokeWidth="2" /><path d="M6 6l12 12M18 6L6 18" stroke="#555" strokeWidth="4" /></Svg>
    </BareButton>
  </>
);
const LayerTools = styled.div`
  display: flex;
  align-items: center;
  height: 26px;
  padding-left: 4px;
`;
const LayerTool = styled(ToolButton)`
  width: 25px;
  height: 23px;
`;
const Tree = styled.div`
  flex: 1;
  margin-top: 3px;
  border: 1px solid ${BORDER};
  background: #fcfcfc;
`;
const TreeRow = styled.div`
  display: flex;
  align-items: center;
  gap: 6px;
  height: 24px;
  padding: 0 7px 0 ${(p) => p.$depth * 20}px;
  background: ${(p) => (p.$sel ? "#c2dff4" : "none")};
`;
const Twisty = styled(BareButton)`
  width: 20px;
  height: 20px;
  margin-right: -3px;
`;
const LayerName = styled.label`
  flex: 1;
  font-weight: ${(p) => (p.$kind === "plain" ? 400 : 700)};
  font-style: ${(p) => (p.$kind === "off" ? "italic" : "normal")};
  color: ${(p) => (p.$kind === "off" ? "#8d8e8f" : "inherit")};
  text-decoration: ${(p) => (p.$kind === "current" ? "underline" : "none")};
  text-underline-offset: 3px;
`;
const Chip = styled.button`
  display: flex;
  align-items: center;
  justify-content: center;
  width: 20px;
  height: 20px;
  padding: 0;
  border: 1px solid #e6e7e8;
  border-radius: 3px;
  background: #fcfcfc;
`;
const ChipIcon = () => (
  <svg width="14" height="14" viewBox="0 0 14 14" fill="none" stroke="#5a5c5e" aria-hidden="true">
    <rect x="0.5" y="3.5" width="13" height="7" />
    <path d="M2.500 1v3M5.500 1v3M8.500 1v3M11.500 1v3M2.500 10v3M5.500 10v3M8.500 10v3M11.500 10v3" />
  </svg>
);
const PolyIcon = () => (
  <svg width="16" height="16" viewBox="0 0 24 24" aria-hidden="true">
    <path d="M1 5c3-5 7-1 11-1s9-4 11 0-1 13-4 12-5-4-8-3-5 6-8 5S-1 9 1 5z" fill="#e3e5e6" stroke="#8f9496" strokeWidth="1.600" />
  </svg>
);

const CLASSES = [
  ["#bdb194", "0.0 - -1", "-1,000000 - 0,000000", "#99aeb2"],
  ["#729b70", "-2 - -1", "-2,000000 - -1,000000"],
  ["#5f565a", "0 - 20000", "0,000000 - 20000,000000"],
  ["#466b72", "20000 - 40000", "20000,000000 - 40000,000000"],
  ["#2a8188", "40000 - 60000", "40000,000000 - 60000,000000"],
  ["#20a387", "60000 - 80000", "60000,000000 - 80000,000000"],
  ["#4bc16c", "80000 - 100000", "80000,000000 - 100000,000000"],
  ["#9fda3a", "100000 - 120000", "100000,000000 - 120000,000000"],
  ["#fde725", "120000 - 129511,7", "120000,000000 - 129511,725000"],
];

const small = (children) => <Svg s={16}>{children}</Svg>;
const LAYERS = [
  { d: 0, t: "open", on: true, icon: small(I.group), n: "OSM_SantaFe", k: "plain" },
  { d: 1, icon: <Swatch $fill="#fff" $line="#c53030" />, n: "Hecho buffer", k: "off", chip: true },
  { d: 1, icon: small(<circle cx="12" cy="12" r="4" fill="#b8dc2c" stroke="#5b6b1c" strokeWidth="1.500" />), n: "osm_pofw", k: "off" },
  { d: 1, icon: small(<circle cx="12" cy="12" r="4.500" fill="#7a8585" stroke="#555c5c" strokeWidth="1.500" />), n: "osm_pois_limpia", k: "off", chip: true },
  { d: 1, icon: small(<path d="M0 12h24" stroke="#b9d6ff" strokeWidth="3" />), n: "osm_waterways", k: "off" },
  { d: 1, icon: small(<path d="M0 12h24" stroke="#dcc6c9" strokeWidth="3" />), n: "osm_roads", k: "off" },
  { d: 1, t: "shut", icon: small(<g stroke="#888"><circle cx="5" cy="18" r="1.500" /><circle cx="8" cy="8" r="1.500" /><circle cx="19" cy="4" r="1.500" /></g>), n: "osm_pois_", k: "off", chip: true },
  { d: 1, icon: <Swatch $fill="#fff" />, n: "limite_provincial_santafe", k: "off" },
  { d: 1, icon: <Swatch $fill="#ff9e17" />, n: "Polígonos Voronoi", k: "off", chip: true },
  { d: 1, on: true, icon: <Swatch $fill="#3c2346" />, n: "espacios_construidos_cuadriculados_", k: "on" },
  { d: 1, on: true, icon: <Swatch $fill="#c8f4a4" />, n: "espacios_verdes_cuadriculados_", k: "on" },
  { d: 1, t: "open", on: true, sel: true, icon: <PolyIcon />, n: "Cuadrícula", k: "current", chip: true },
  ...CLASSES.map((c) => ({ d: 2, on: true, icon: <Swatch $size={18} $fill={c[0]} />, n: c[1], k: "plain" })),
  { d: 1, table: true, n: "espacios_verdes_cuadriculados", k: "on" },
  { d: 1, table: true, n: "espacios_construidos_cuadriculados", k: "on" },
  { d: 1, icon: <Swatch $fill="#8b5a99" />, n: "osm_buildings", k: "off" },
  { d: 1, t: "shut", on: true, icon: <PolyIcon />, n: "Intersección", k: "on", chip: true },
  { d: 1, icon: <Swatch $fill="#f4a3b0" />, n: "Edificios_industriales", k: "off", chip: true },
  { d: 1, t: "shut", on: true, icon: <PolyIcon />, n: "osm_landuse", k: "on", chip: true },
  { d: 0, t: "shut", icon: small(<g><path d="M2 2h20v20H2z" fill="#b9cbe2" /><path d="M2 2h7v6H2zM15 2h7v6h-7zM9 8h6v7H9zM2 16h7v6H2z" fill="#26374f" /><path d="M15 15h7v7h-7z" fill="#e8eef6" /></g>), n: "OpenStreetMap", k: "off" },
];
const TableIcon = () => (
  <Svg s={16}><path d="M2 1h20v22H2z" fill="#e9e9e7" stroke="#777" strokeWidth="1.500" /><path d="M2 6h20M5 3.500h5M13 3.500h6M5 10h5M13 10h6M5 14h5M13 14h6M5 18h5M13 18h6" stroke="#777" strokeWidth="1.500" /></Svg>
);

const TabStrip = styled.div`
  display: flex;
  align-items: flex-start;
  height: 33px;
  margin-top: 1px;
  & > button:first-child { border-left: 1px solid ${BORDER}; }
`;
const DockTab = styled.button`
  height: ${(p) => (p.$on ? 32 : 30)}px;
  width: ${(p) => (p.$w ? `${p.$w}px` : "auto")};
  flex: ${(p) => (p.$grow ? 1 : "none")};
  padding: 0 12px;
  border: 1px solid ${BORDER};
  border-left: 0;
  ${(p) => p.$on && css`border-top-color: transparent;`}
  border-radius: 0 0 3px 3px;
  background: ${(p) => (p.$on ? "#fafbfc" : "linear-gradient(#d9dadb, #dfe0e1)")};
  white-space: nowrap;
`;

const LayersDock = () => (
  <Dock $w={414}>
    <DockHead><h2>Capas</h2><DockButtons /></DockHead>
    <LayerTools>
      {["brush", "groupAdd", "eye", "funnel", "exprFilter"].map((n, i) => (
        <LayerTool key={n} $on={i === 0} aria-label={n}><Svg s={16}>{I[n]}</Svg></LayerTool>
      ))}
      <BareButton aria-label="Más filtros"><Caret w={8} /></BareButton>
      {["expand", "collapse", "removeLayer"].map((n) => (
        <LayerTool key={n} aria-label={n}><Svg s={16}>{I[n]}</Svg></LayerTool>
      ))}
    </LayerTools>
    <Tree role="tree">
      {LAYERS.map((l, i) => (
        <TreeRow key={i} role="treeitem" $depth={l.d} $sel={l.sel}>
          <Twisty aria-label="Desplegar" disabled={!l.t}>
            {l.t === "open" && <Caret />}
            {l.t === "shut" && <svg width="4" height="8" viewBox="0 0 4 8" aria-hidden="true"><path d="M0 0v8l4-4z" fill="#6b6d6f" /></svg>}
          </Twisty>
          {l.table ? <TableIcon /> : <Check id={`layer${i}`} defaultChecked={l.on} />}
          {l.icon}
          <LayerName htmlFor={l.table ? undefined : `layer${i}`} $kind={l.k}>{l.n}</LayerName>
          {l.chip && <Chip aria-label="Capa temporal"><ChipIcon /></Chip>}
        </TreeRow>
      ))}
    </Tree>
    <TabStrip>
      <DockTab $w={102}>Navegador</DockTab>
      <DockTab $on $w={67}>Capas</DockTab>
    </TabStrip>
  </Dock>
);

const Splitter = styled.div`
  display: flex;
  align-items: center;
  justify-content: center;
  width: ${(p) => p.$w}px;
  flex: none;
  &::before {
    content: "";
    width: 3px;
    height: 18px;
    background: radial-gradient(circle, #a9abad 0 1px, transparent 1px) 0 0 / 3px 3px;
  }
`;

/* ---------- map ---------- */

const Canvas = styled.div`
  flex: 1;
  min-width: 0;
  display: flex;
  justify-content: center;
  margin-top: 1px;
  border: 1px solid ${BORDER};
  background: #fff;
  & > svg { width: 100%; height: auto; align-self: flex-start; }
`;

const CELL = 10.235;
const GRID = [
  "17:gdgg 22:ggggg", "13:ggg 17:gggg 22:gg 25:gg 31:gggggggd", "13:ggdg 18:gg 25:gg 30:d 32:ggggggg",
  "12:ggddggggg 32:gggdgd", "13:gdggg 19:gg 30:dggggggg", "12:ggggggg 29:ggggggggd", "12:ggggggg 28:gggggdggdd",
  "12:ggdgggg 27:ggdggggg 36:gg 39:g", "11:gggggggg 27:ggdgdgggggg", "11:dgggggg 26:gggg 31:gg 34:dd",
  "11:ggdggggg 26:gggg 31:ggddg", "11:ggggggggg 25:ggtdggdggd 37:g", "11:ggggggg 20:g 23:ggdg 28:gggdg",
  "11:gdgggggg 20:g 22:ggggg 28:ggdgdd 35:t", "11:gggggggg 22:ggggg 28:ggggdd", "10:ggggggggg 21:ggggg 27:bgggdgg",
  "11:gggggggg 22:ggg 26:gdgdggdg", "10:ggggggggg 22:gggggdg 31:dd", "10:dgggg 16:gggg 22:gggd 28:g 30:gdt",
  "9:gd 12:ggggggggggggggddgggg", "9:dddddggggggggggggdgggg", "9:ddddd 15:ggggggggg 26:dggggg",
  "9:dddddgggd 20:ggggggdgdgdg", "9:dddg 17:g 21:ggdgggggg 31:t", "9:gtg 17:gggd 22:gggdgggg",
  "9:d 12:dgg 17:ggggggggggggg", "10:dgggg 16:gd 20:gggggdggg 31:d", "11:gg 15:ggggggggggdggg 31:t",
  "10:d 13:g 18:gggdgggggdg 31:g", "10:gggg 16:ggggggggdg 27:ggd", "10:gggddgdggggggdgggggt", "10:gggdd 16:ggggggggggggg",
  "10:dggd 15:ddggdggggggg 28:g", "10:gggddt 17:tgdgdggggg", "10:gggdt 16:ggdggdggggg", "9:gdgggg 18:tddggg 27:d",
  "9:g 11:dgddtdggdgd 26:dg", "9:t 11:dgdt 16:d 18:dg 21:dd 24:g", "8:dddgd 14:dtdtddtdd 25:d", "8:gggg 13:ddt 17:tddgdtggt",
  "8:dggg 15:dtdddddddgg", "8:d 11:dgd 15:ddddddddg", "8:g 10:dt 15:d 17:dttd", "9:gd 12:dgggdd 19:dd", "8:dgg 12:gggdd 18:tdd",
  "7:g 9:ggggggddddggg", "9:d 11:gggg 16:ddddt", "9:dddgbg 17:ddddd", "9:gggg 14:dd 17:gdddg", "9:ddgg 14:ddggdddd",
  "9:gdgd 15:ggdddd", "9:gtg 13:gdgd 18:ddd", "9:gd 13:dgggdddd", "10:dtdddgggddd", "14:dddddddd", "12:ddgddddddd",
  "10:d 12:d 14:gdddddddd", "9:ggd 13:ddgddddddd", "8:gggg 14:dgddddddddd", "8:dgg 13:dgggddddd 23:dd",
  "7:d 9:dtdgdggd 18:gggdd 24:d", "7:gd 11:tddggg 18:dd 22:dt", "5:ggd 9:dgtggdgdt 19:d 21:d", "4:ggdgdddd 13:dd 21:d",
  "4:gg 8:ddd 14:dd 17:d", "7:dgg 11:dg 15:t", "5:td 8:td 11:d", "5:dt 8:dd 11:dt", "1:ggdd 7:d 10:g 12:tt",
  "0:ggdggg 10:g 12:g", "1:g 4:dgdd 9:g", "6:tt",
];
const TONE = { g: "#729b70", d: "#5f565a", t: "#bdb194", b: "#3f6a75" };
const CELLS = GRID.flatMap((line, r) =>
  line.split(" ").flatMap((run) => {
    const [start, tones] = run.split(":");
    return [...tones].map((t, i) => ({ x: 681.3 + (Number(start) + i) * CELL, y: 233.5 + r * CELL, t }));
  })
);
const byTone = (t) => CELLS.filter((c) => c.t === t).map((c) => `M${c.x.toFixed(1)} ${c.y.toFixed(1)}h${CELL}v${CELL}h-${CELL}z`).join("");
const OUTLINE = Object.keys(TONE).map(byTone).join("");

const GREEN = {
  "740 215": [
    "490,460 530,460 592,446 594,470 575,500 570,520 590,550 545,547 500,530 502,480",
    "348,595 375,605 410,640 455,655 458,685 415,712 410,680 332,672 340,630", "320,702 340,715 350,745 355,755 288,755 295,718",
    "350,278 370,272 388,292 350,300 322,296", "296,418 318,428 314,450 290,446", "790,585 803,590 800,612 788,605",
    "735,280 755,260 768,300 735,305", "663,280 685,300 665,315", "540,735 552,750 535,758", "695,475 712,485 700,520 690,515",
    "605,88 634,92 628,108 612,100", "845,98 862,110 890,150 852,138", "880,118 920,100 900,150", "515,625 535,620 525,660",
    "775,630 785,640 745,690", "700,320 718,312 710,332", "718,248 740,250 745,262", "288,320 300,325 292,355", "310,300 328,305 322,330",
    "272,375 290,350 300,385 275,388", "305,370 322,378 315,390", "325,402 342,408 330,425", "230,500 248,505 255,530 235,540",
    "258,485 275,495 262,512", "485,690 498,695 495,715", "255,670 272,682 262,688", "215,640 228,650 218,660", "688,350 700,360 718,368 690,362",
    "340,490 350,500 385,505 352,515", "822,205 835,218 828,228", "812,180 822,190 815,200", "662,530 678,522 680,540", "715,440 732,450 722,455",
  ],
  "740 470": [
    "158,185 228,198 232,250 240,300 165,300 165,240 150,215", "160,308 185,315 215,320 205,390 185,393 140,380 145,345",
    "233,362 267,370 263,382 230,376", "412,182 438,190 435,210 410,208", "450,212 480,255 578,285 572,320 480,300 420,285 418,255",
    "335,123 365,125 360,143 318,138", "505,75 528,85 528,150 535,240 500,240 505,150", "710,30 738,55 715,85 690,90 695,60",
    "665,165 685,170 680,210 640,300 625,295 650,230", "425,340 465,335 465,370 430,365", "455,300 467,310 460,340 452,335",
    "225,620 280,635 285,700 230,695 218,660", "168,675 225,690 252,742 195,732", "105,640 138,650 135,668 105,665",
    "350,200 378,202 395,215 352,212", "348,220 395,228 400,238 350,232", "322,248 342,252 340,265 324,262", "350,254 370,258 368,270 350,266",
    "382,255 400,265 427,310 428,340 415,330 395,290", "120,768 150,765 180,778 125,778", "418,537 445,540 445,555 422,548",
    "155,485 162,490 158,525 150,520", "80,490 88,495 82,515", "555,130 590,100 595,115 565,145", "445,125 470,122 465,140 445,142",
    "235,80 242,72 247,85", "258,98 278,92 268,102", "605,315 615,320 612,340", "370,405 395,400 410,415 385,420", "230,430 250,428 232,438",
    "120,672 132,678 126,688", "425,425 435,425 432,442", "455,372 465,380 450,420 440,420", "295,615 330,620 325,640 300,635",
  ],
  "660 720": [
    "360,18 395,22 418,35 395,40 388,55 375,45", "443,25 455,50 440,55", "540,65 580,78 583,95 572,112",
    "490,115 518,120 518,137 550,140 556,165 540,185 515,180 505,150 488,138",
    "605,190 620,165 645,158 655,180 690,185 700,205 705,320 640,328 600,318 550,310 530,262 560,232 590,220",
    "370,300 412,310 425,325 365,360 350,368 325,355 335,335 365,340", "515,350 545,350 553,375 535,388 510,370",
    "550,395 583,430 570,455 545,448 500,465 497,440 530,405", "640,400 660,385 670,405 655,412", "680,370 700,360 705,390 690,400",
    "215,490 230,480 240,490 225,508", "235,460 252,458 250,468", "388,656 398,654 396,664",
  ],
};
/* winding rivers and roads */
const LINES = {
  "740 215": [
    "150,545 200,530 250,545 300,570 350,600 400,625 440,640 475,660 500,700 505,760", "280,580 280,640 350,655 420,690 470,710 490,760",
    "640,398 600,410 592,440", "930,150 938,220 925,280 945,330", "880,250 890,300 870,330 905,360", "655,575 600,600 555,625 560,660 590,675",
    "685,560 710,620 720,680 725,720 760,725", "750,690 770,650 800,600", "785,90 805,110 815,200 800,300 815,380 800,440 790,560",
    "530,770 500,690 520,640 540,570", "655,640 655,700 690,740 700,780", "360,720 400,710 440,690 470,690",
  ],
  "740 470": [
    "500,0 520,40 500,80 510,140", "365,120 400,145 440,170 470,200 500,215 500,240", "655,0 655,120 600,180 610,250 580,290 610,345",
    "690,0 690,120 680,180 650,230 620,330", "465,370 440,430 410,415", "482,545 440,610 400,670 398,730 395,780", "435,270 440,330 465,370",
    "285,120 340,115 380,130 420,160 500,200", "545,495 575,512", "560,60 580,0",
  ],
  "660 720": [
    "633,0 645,80 665,150 690,200 720,260 780,340 815,380", "640,0 660,70 680,120 690,180 715,240 760,320 820,380", "655,90 690,200 705,240 715,270",
    "565,220 620,210 690,240 740,300", "590,220 600,320", "560,232 640,240 705,250", "95,670 150,655 215,645", "530,262 700,280",
  ],
};
/* [x, y, width, height, strokes, reach] in the local units of each block */
const DENSE = {
  "740 215": [
    [225, 95, 90, 80, 40, 9], [350, 70, 95, 60, 45, 9], [195, 210, 200, 100, 85, 8], [255, 160, 110, 70, 32, 8], [168, 310, 215, 130, 90, 8],
    [170, 430, 215, 110, 95, 8], [155, 540, 190, 60, 20, 7], [820, 92, 150, 60, 100, 10], [905, 150, 80, 150, 28, 9], [740, 210, 120, 120, 40, 9],
    [650, 280, 90, 90, 20, 8], [845, 340, 50, 80, 22, 10], [740, 400, 90, 90, 20, 9], [560, 480, 90, 60, 32, 8], [655, 440, 120, 110, 45, 9],
    [825, 460, 30, 40, 35, 8], [775, 510, 40, 60, 45, 9], [500, 560, 170, 200, 36, 8], [640, 660, 130, 110, 50, 9], [124, 672, 100, 108, 330, 10],
    [470, 680, 60, 90, 36, 8], [600, 80, 35, 50, 12, 7], [430, 170, 25, 25, 8, 8], [190, 630, 70, 50, 22, 7], [990, 95, 20, 20, 10, 8],
  ],
  "740 470": [
    [108, 0, 75, 12, 50, 8], [385, 45, 50, 45, 35, 9], [440, 60, 60, 90, 28, 8], [500, 80, 100, 90, 50, 9], [640, 0, 70, 70, 45, 9],
    [345, 190, 70, 80, 38, 9], [560, 170, 60, 100, 20, 8], [470, 240, 70, 40, 30, 8], [365, 395, 50, 25, 35, 9], [340, 340, 20, 22, 18, 6],
    [290, 610, 50, 40, 90, 9], [470, 525, 26, 30, 60, 7], [500, 525, 50, 30, 25, 8], [415, 640, 50, 50, 35, 8], [90, 455, 30, 40, 15, 7],
    [290, 440, 120, 60, 18, 4], [320, 500, 140, 90, 18, 4], [300, 690, 190, 90, 25, 5], [455, 555, 15, 25, 30, 6], [240, 300, 20, 15, 12, 6],
    [255, 400, 20, 22, 25, 6], [725, 190, 14, 20, 12, 5], [230, 490, 50, 30, 8, 4],
  ],
  "660 720": [
    [655, 40, 45, 120, 60, 8], [600, 175, 100, 140, 80, 9], [645, 200, 70, 60, 120, 9], [700, 235, 35, 70, 150, 9], [735, 300, 40, 40, 70, 8],
    [780, 335, 45, 40, 30, 9], [345, 455, 30, 25, 18, 6], [320, 485, 30, 45, 40, 7], [90, 660, 60, 20, 80, 8], [140, 645, 75, 18, 100, 8],
    [465, 395, 25, 45, 12, 5], [600, 10, 10, 50, 14, 6], [380, 25, 40, 25, 18, 6], [660, 360, 45, 45, 22, 7], [400, 0, 60, 100, 8, 4],
    [480, 240, 90, 140, 14, 4], [340, 420, 100, 60, 12, 4], [430, 100, 160, 90, 16, 4], [560, 330, 150, 110, 18, 4], [690, 160, 25, 80, 60, 8],
  ],
};
/* small green plots scattered through an area */
const PLOTS = {
  "740 215": [
    [228, 105, 85, 60, 14, 9], [360, 75, 75, 35, 8, 8], [315, 200, 45, 110, 24, 11], [290, 305, 45, 90, 24, 12], [275, 390, 75, 120, 30, 12],
    [200, 480, 80, 60, 16, 11], [330, 480, 60, 40, 10, 10], [205, 220, 60, 60, 6, 7], [830, 95, 110, 50, 30, 11], [815, 165, 45, 60, 12, 9],
    [725, 240, 60, 70, 12, 11], [665, 290, 60, 70, 8, 9], [680, 470, 50, 60, 12, 11], [560, 500, 60, 30, 8, 9], [500, 600, 40, 150, 10, 9],
    [690, 400, 40, 50, 6, 8], [205, 640, 60, 40, 8, 8], [470, 690, 40, 80, 8, 9],
  ],
  "740 470": [[345, 195, 60, 70, 14, 9], [500, 90, 95, 60, 14, 10], [445, 70, 30, 80, 8, 9], [385, 50, 45, 30, 6, 7], [430, 300, 35, 110, 10, 9], [640, 240, 60, 40, 5, 8], [365, 400, 45, 20, 8, 7], [300, 612, 35, 30, 8, 7]],
  "660 720": [[650, 170, 50, 70, 12, 9], [640, 370, 60, 40, 8, 9], [370, 22, 50, 30, 6, 9]],
};
const randomFrom = (seed) => {
  let s = seed * 7919 + 17;
  return () => ((s = (s * 1103515245 + 12345) % 2147483648) / 2147483648);
};
const scribble = ([x, y, w, h, n, reach], seed) => {
  const rnd = randomFrom(seed);
  let d = "";
  for (let i = 0; i < n; i += 1) {
    let px = x + rnd() * w;
    let py = y + rnd() * h;
    d += `M${px.toFixed(0)} ${py.toFixed(0)}`;
    for (let j = 0; j < 3; j += 1) {
      px += (rnd() - 0.5) * reach * 1.4;
      py += (rnd() - 0.5) * reach * 1.4;
      d += `L${px.toFixed(0)} ${py.toFixed(0)}`;
    }
  }
  return d;
};
const plots = ([x, y, w, h, n, size], seed) => {
  const rnd = randomFrom(seed + 40);
  let d = "";
  for (let i = 0; i < n; i += 1) {
    const px = x + rnd() * w;
    const py = y + rnd() * h;
    const pts = [0, 1, 2, 3, 4].map((k) => {
      const a = (k / 5) * 6.283 + rnd();
      const r = size * (0.4 + rnd() * 0.8);
      return `${(px + Math.cos(a) * r).toFixed(0)} ${(py + Math.sin(a) * r).toFixed(0)}`;
    });
    d += `M${pts.join("L")}z`;
  }
  return d;
};
const winding = (points, seed) => {
  const rnd = randomFrom(seed + 90);
  const pts = points.split(" ").map((p) => p.split(",").map(Number));
  let d = `M${pts[0].join(" ")}`;
  for (let i = 1; i < pts.length; i += 1) {
    const [ax, ay] = pts[i - 1];
    const [bx, by] = pts[i];
    const steps = Math.max(2, Math.round(Math.hypot(bx - ax, by - ay) / 9));
    for (let k = 1; k <= steps; k += 1) {
      const f = k / steps;
      d += `L${(ax + (bx - ax) * f + (rnd() - 0.5) * 7).toFixed(0)} ${(ay + (by - ay) * f + (rnd() - 0.5) * 7).toFixed(0)}`;
    }
  }
  return d;
};
const place = (k) => `translate(${k}) scale(0.3333)`;
const specks = CELLS.filter((c, i) => (i * 37) % 10 < 6).map((c, i) => `M${(c.x + 2 + ((i * 53) % 7)).toFixed(1)} ${(c.y + 2 + ((i * 31) % 6)).toFixed(1)}l1.200 .800`).join("");

const MapView = () => (
  <Canvas>
    <svg viewBox="421 215 950 783" role="img" aria-label="Mapa de Cuadrícula">
      <clipPath id="cells"><path d={OUTLINE} /></clipPath>
      {Object.keys(TONE).map((t) => <path key={t} d={byTone(t)} fill={TONE[t]} />)}
      <g clipPath="url(#cells)">
        {Object.entries(GREEN).map(([k, list]) => (
          <g key={k} transform={place(k)} fill="#c8f4a4" stroke="#2b3328" strokeWidth="2.500" strokeLinejoin="round">
            {list.map((p) => <polygon key={p} points={p} />)}
          </g>
        ))}
        {Object.entries(DENSE).map(([k, list]) => (
          <g key={k} transform={place(k)} fill="none" stroke="#252a25" strokeWidth="2.200">
            {list.map((c, i) => <path key={i} d={scribble(c, i + 1)} />)}
          </g>
        ))}
        {Object.entries(PLOTS).map(([k, list]) => (
          <g key={k} transform={place(k)} fill="#c8f4a4" stroke="#2b3328" strokeWidth="1.800">
            {list.map((c, i) => <path key={i} d={plots(c, i + 1)} />)}
          </g>
        ))}
      </g>
      <polygon points="817.500,705 824,705 823.500,714.500" fill="#fdd90f" stroke="#2b3328" strokeWidth=".700" />
      <path d={OUTLINE} fill="none" stroke="#232323" strokeOpacity=".850" strokeWidth="1.050" />
      <g clipPath="url(#cells)">
        <path d={specks} stroke="#1f2220" strokeWidth="1" fill="none" />
        <path d="M783 438l10-1 8 3 13 1-1 11 2 9-6 13-9 1-3 3-9-1-8-2 3-12-2-12z" fill="#262526" />
        {Object.entries(LINES).map(([k, list]) => (
          <g key={k} transform={place(k)} fill="none" stroke="#262b26" strokeWidth="2.800" strokeLinejoin="round">
            {list.map((p, i) => <path key={p} d={winding(p, i)} />)}
          </g>
        ))}
        <g fill="#2e1a38"><circle cx="901" cy="650" r="4" /><circle cx="828" cy="607" r="3" /><circle cx="918" cy="558" r="2" /><circle cx="1021" cy="377" r="3" /><circle cx="899" cy="803" r="3" /><circle cx="849" cy="812" r="2.500" /></g>
      </g>
      <path d="M883 458l18 8-6 3 8 7-5 4-7-8-4 6z" fill="#000" stroke="#fff" strokeWidth="1.200" />
      <text x="896" y="470" fontSize="17" fontWeight="700" fontStyle="italic" fontFamily="DejaVu Serif, serif" fill="#000" stroke="#fff" strokeWidth=".600">i</text>
    </svg>
  </Canvas>
);

/* ---------- style dock ---------- */

const StyleArea = styled.div`
  display: flex;
  flex: 1;
  flex-direction: column;
  margin: 1px 3px 3px 2px;
`;
const StyleBody = styled.div`
  display: flex;
  flex: 1;
  gap: 3px;
  margin-top: 6px;
`;
const SideTabs = styled.div`
  width: 38px;
  flex: none;
  background: #5d5d5d;
`;
const SideTab = styled.button`
  display: flex;
  align-items: center;
  justify-content: center;
  width: 38px;
  height: 32px;
  padding: 0 6px 0 0;
  border: 0;
  background: ${(p) => (p.$on ? "#eff0f1" : "none")};
`;
const Form = styled.div`
  display: flex;
  flex: 1;
  min-width: 0;
  flex-direction: column;
`;
const Fields = styled.div`
  display: grid;
  grid-template-columns: 147px 1fr;
  row-gap: 6px;
  margin-top: 6px;
  align-items: center;
`;
const Row = styled.div`
  display: flex;
  align-items: center;
  gap: ${(p) => p.$gap || 0}px;
  min-height: ${(p) => p.$h || 20}px;
  margin-top: ${(p) => p.$top || 0}px;
`;
const Push = styled.span`
  flex: 1;
`;
const RampButton = styled.button`
  ${face}
  flex: 1;
  height: 30px;
  padding: 5px 4px;
`;
const Ramp = styled.span`
  display: block;
  height: 18px;
  border: ${(p) => (p.$plain ? "1px solid #6f6857" : "0")};
  background: ${(p) => p.$fill};
`;
const LegendInput = styled.input`
  ${face}
  width: 143px;
  height: 30px;
  padding: 0 3px;
  background: #fcfcfc;
`;
const CheckLabel = styled.label`
  display: inline-flex;
  align-items: center;
  gap: ${(p) => p.$gap || 5}px;
  font-weight: ${(p) => (p.$bold ? 700 : 400)};
`;
const PageTabs = styled.div`
  display: flex;
  align-items: flex-end;
  height: 33px;
  margin-top: 7px;
  border-bottom: 1px solid ${BORDER};
`;
const PageTab = styled.button`
  height: ${(p) => (p.$on ? 33 : 31)}px;
  width: ${(p) => p.$w}px;
  margin-bottom: -1px;
  padding: 0;
  border: 1px solid ${BORDER};
  ${(p) => (p.$on ? css`border-bottom-color: #fcfcfc;` : css`border-left: 0;`)}
  border-radius: 3px 3px 0 0;
  background: ${(p) => (p.$on ? "#fcfcfc" : "#e9eaea")};
`;
const TableFrame = styled.div`
  flex: 1;
  margin-top: 10px;
  border: 1px solid ${BORDER};
  background: #fcfcfc;
`;
const ClassTable = styled.table`
  width: 100%;
  table-layout: fixed;
  border-collapse: collapse;
  text-align: left;
  white-space: nowrap;
  th {
    height: 26px;
    padding: 0 3px 0 2px;
    font-weight: 400;
    background: linear-gradient(#fcfcfc, #ececed);
    border-bottom: 1px solid ${BORDER};
  }
  th + th { border-left: 1px solid #c9cbcc; }
  th:first-child svg { float: right; margin: 6px 2px; }
  td { height: 22px; padding: 0 0 0 3px; }
  td > span { display: flex; align-items: center; gap: 6px; }
`;
const ClassRow = styled.tr`
  ${(p) => p.$sel && css`background: #3daee9; color: #eff0f1;`}
`;
const Expander = styled(BareButton)`
  width: 16px;
  height: 20px;
`;
const Solid = () => (
  <svg width="7" height="12" viewBox="0 0 7 12" aria-hidden="true"><path d="M0 0v12l7-6z" fill="#2d2f31" stroke="#111" strokeWidth=".500" /></svg>
);

const RAMP = "linear-gradient(90deg, #7f4347, #5b5c60 18%, #40707a 33%, #21908c 48%, #27ad81 63%, #5cc863 76%, #aadc32 88%, #fde725)";

const StyleDock = () => (
  <Dock $w={540}>
    <DockHead $left={3}><h2>Estilo de capas</h2><DockButtons /></DockHead>
    <StyleArea>
      <Combo>
        <PolyIcon />
        <Select aria-label="Capa"><option>Cuadrícula</option></Select>
        <Caret />
      </Combo>
      <StyleBody>
        <SideTabs>
          <SideTab $on aria-label="Simbología"><Svg s={22}><Brush /></Svg></SideTab>
          <SideTab aria-label="Etiquetas"><Svg s={22}><Tag /></Svg></SideTab>
          <SideTab aria-label="Máscaras">
            <Svg s={24}><text x="1" y="16" fontSize="12" fontWeight="700" fontFamily="Noto Sans, sans-serif" fill="#333" stroke="#e8eefb" strokeWidth="3" paintOrder="stroke">abc</text></Svg>
          </SideTab>
          <SideTab aria-label="Vista 3D"><Svg s={22}><path d="M12 1l10 6-10 6L2 7z" fill="#f57c7c" stroke="#a01616" strokeWidth="1.500" /><path d="M2 7l10 6v10L2 17z" fill="#7ddc34" stroke="#3d7a12" /><path d="M22 7l-10 6v10l10-6z" fill="#fbe54a" stroke="#8f7d10" /></Svg></SideTab>
          <SideTab aria-label="Diagramas"><Svg s={22}><path d="M5 6v10M12 6v14M19 6v10M5 15h14" stroke="#c8923a" strokeWidth="3" /><path d="M8 0h8v7H8z" fill="#ee6060" stroke="#b03030" /><path d="M1 17h9v6H1z" fill="#fbe04a" stroke="#a98a10" /><path d="M14 17h9v6h-9z" fill="#8dbdf2" stroke="#3d74b0" /></Svg></SideTab>
          <SideTab aria-label="Historial"><Svg s={20}><path d="M2 11C1 5 5 2 11 3V0l6 5-6 5V7c-4-1-5 1-4 5z" fill="#6aa680" /><path d="M22 13c2 6-2 10-8 9v3l-6-6 6-5v3c4 1 5-1 4-5z" fill="#e0763c" /></Svg></SideTab>
        </SideTabs>
        <Form>
          <Combo>
            <Svg s={16}><path d="M2 1h14v4H2z" fill="#ffcf1a" stroke="#e7a400" /><path d="M5 9h14v5H5z" fill="#f55410" stroke="#b93400" /><path d="M2 18h14v4H2z" fill="#a80c0c" stroke="#5e0000" /></Svg>
            <Select aria-label="Renderizado"><option>Graduado</option></Select>
            <Caret />
          </Combo>
          <Fields>
            <label htmlFor="valor">Valor</label>
            <Row $gap={7} $h={30}>
              <Combo $plain $grow>
                <Svg s={18}><text x="0" y="15" fontSize="12" fontWeight="700" fontFamily="DejaVu Sans Mono, monospace" fill="#555">1.2</text></Svg>
                <Select id="valor"><option>ratio</option></Select>
                <DropPart><Caret /></DropPart>
              </Combo>
              <PushButton $w={24} aria-label="Expresión"><Svg s={18}><Epsilon x={5} y={18} size={22} /></Svg></PushButton>
            </Row>
            <span>Símbolo</span>
            <Row $gap={1}>
              <RampButton aria-label="Símbolo"><Ramp $plain $fill="#bdb194" /></RampButton>
              <PushButton $w={12} aria-label="Opciones de símbolo"><Caret w={7} /></PushButton>
            </Row>
            <label htmlFor="formato">Formato de leyenda</label>
            <Row $gap={6}>
              <LegendInput id="formato" defaultValue="%1 - %2" />
              <Spin w={113} value="Precisión 4" label="Precisión" />
              <CheckLabel><Check defaultChecked />Limpiar</CheckLabel>
            </Row>
            <span>Rampa de color</span>
            <Row $gap={1}>
              <RampButton aria-label="Rampa de color"><Ramp $fill={RAMP} /></RampButton>
              <PushButton $w={12} aria-label="Opciones de rampa"><Caret w={7} /></PushButton>
            </Row>
          </Fields>
          <PageTabs>
            <PageTab $on $w={70}>Clases</PageTab>
            <PageTab $w={106}>Histograma</PageTab>
          </PageTabs>
          <TableFrame>
            <ClassTable>
              <colgroup><col width="92" /><col width="233" /><col /></colgroup>
              <thead>
                <tr><th>Símbolo<Caret up /></th><th>Valores</th><th>Leyenda</th></tr>
              </thead>
              <tbody>
                {CLASSES.map((c, i) => (
                  <ClassRow key={c[1]} $sel={i === 0}>
                    <td><span><Check defaultChecked aria-label={c[1]} /><Swatch $fill={c[3] || c[0]} /></span></td>
                    <td>{c[2]}</td>
                    <td>{c[1]}</td>
                  </ClassRow>
                ))}
              </tbody>
            </ClassTable>
          </TableFrame>
          <Row $gap={6} $h={30} $top={6}>
            <label htmlFor="modo">Modo</label>
            <Combo $w={228}>
              <Svg s={16}><path d="M2 1v21M9 1v21M16 1v21M22 1v21" stroke="#5d8cc4" strokeWidth="1.500" /><path d="M3 10h5v12H3zM10 13h5v9h-5zM17 17h4v5h-4z" fill="#ddd37a" /><path d="M5 5v17M12 8v14M19 15v7" stroke="#111" strokeWidth="3" strokeDasharray="3 2" /></Svg>
              <Select id="modo"><option>Pretty Breaks</option></Select>
              <Caret />
            </Combo>
            <Push />
            <label htmlFor="clases">Clases</label>
            <Spin id="clases" w={78} value="9" label="Clases" />
          </Row>
          <Row $gap={4} $h={30} $top={4}>
            <Expander aria-label="Desplegar"><Solid /></Expander>
            <CheckLabel $bold $gap={8}><Check />Clasificación simétrica</CheckLabel>
          </Row>
          <Row $gap={6} $h={30} $top={1}>
            <PushButton $w={80}>Clasificar</PushButton>
            <PushButton $w={28} $h={24} aria-label="Añadir"><Svg s={14}><path d="M8 1h8v7h7v8h-7v7H8v-7H1V8h7z" fill="#fff" stroke="#4f8c5b" strokeWidth="2" /><path d="M12 5v14M5 12h14" stroke="#4f8c5b" strokeWidth="3" /></Svg></PushButton>
            <PushButton $w={28} $h={24} aria-label="Quitar"><Svg s={14}><path d="M1 8h22v8H1z" fill="#fff" stroke="#e5484d" strokeWidth="2" /><path d="M4 12h16" stroke="#e5484d" strokeWidth="3" /></Svg></PushButton>
            <PushButton $w={91}>Borrar todo</PushButton>
            <Push />
            <PushButton $w={89}>Avanzado <Caret w={6} /></PushButton>
          </Row>
          <Row $top={10}><CheckLabel><Check />Enlazar contornos de clase</CheckLabel></Row>
          <Row $top={21} $gap={6}>
            <Expander aria-label="Desplegar"><Solid /></Expander>
            <strong>Representación de capas</strong>
          </Row>
          <Row $h={30} $top={6} $gap={6}>
            <PushButton $w={24} $h={24} aria-label="Deshacer"><Svg s={13}><Undo c="#e0763c" /></Svg></PushButton>
            <PushButton $w={24} $h={24} aria-label="Rehacer"><Svg s={13}><Redo c="#6fae80" /></Svg></PushButton>
            <Push />
            <CheckLabel><Check defaultChecked />Actualización en vivo</CheckLabel>
            <span />
            <PushButton $w={80}>
              <Svg s={16}><path d="M1 13l4-2 4 5L18 0h5L10 24H7z" fill="#5f8a52" stroke="#3a5f31" /></Svg>
              <span><u>A</u>plicar</span>
            </PushButton>
          </Row>
        </Form>
      </StyleBody>
    </StyleArea>
    <TabStrip>
      <DockTab $w={207}>Resultados de la identifi...</DockTab>
      <DockTab $on $w={99}>Estilo de...</DockTab>
      <DockTab $grow>Caja de herramientas de Pr...</DockTab>
    </TabStrip>
  </Dock>
);

/* ---------- status bar ---------- */

const StatusBar = styled.footer`
  display: flex;
  align-items: center;
  height: 36px;
  padding: 0 7px 0 4px;
  font-size: 12px;
`;
const Locator = styled.label`
  display: flex;
  align-items: center;
  gap: 8px;
  width: 358px;
  height: 30px;
  padding: 0 7px;
  border: 1px solid ${BORDER};
  border-radius: 3px;
  background: #fcfcfc;
  & input { flex: 1; min-width: 0; padding: 0; border: 0; background: none; font-size: 15px; }
  & input::placeholder { color: #8b8d8f; opacity: 1; }
`;
const CoordInput = styled.input`
  ${face}
  width: 117px;
  height: 25px;
  background: #fcfcfc;
  text-align: center;
`;
const StatusGroup = styled.div`
  display: flex;
  align-items: center;
  gap: ${(p) => p.$gap || 4}px;
  margin-left: ${(p) => p.$left || 10}px;
`;

const MENU = [
  ["Pro", "y", "ecto"], ["", "E", "dición"], ["", "V", "er"], ["", "C", "apa"], ["Con", "f", "iguración"], ["Co", "m", "plementos"],
  ["Vect", "o", "rial"], ["", "R", "áster"], ["Base de ", "d", "atos"], ["", "W", "eb"], ["", "M", "alla"], ["Pro", "c", "esos"], ["A", "y", "uda"],
];

export default function App() {
  return (
    <Window>
      <GlobalStyle />
      <TitleBar>
        <Svg s={22}>
          <path d="M11 1a10.500 10.500 0 100 21h4l-4-5a6 6 0 115-5l5 4A10.500 10.500 0 0011 1z" fill="#8bb52a" />
          <path d="M13 12l5 1 6 9h-6l-5-5z" fill="#5e9a2c" /><path d="M10 9l5 1 3 4-4 2-3-3z" fill="#ee7f2d" /><path d="M12 11l4 4" stroke="#fbe04a" />
        </Svg>
        <WindowTitle>*modulo8 — QGIS</WindowTitle>
        <WindowButtons>
          <BareButton aria-label="Minimizar"><Svg s={18}><path d="M5 9l7 7 7-7" stroke="#fcfcfc" strokeWidth="1.500" /></Svg></BareButton>
          <BareButton aria-label="Maximizar"><Svg s={18}><path d="M12 5l7 7-7 7-7-7z" stroke="#fcfcfc" strokeWidth="1.500" /></Svg></BareButton>
          <BareButton aria-label="Cerrar"><Svg s={18}><circle cx="12" cy="12" r="12" fill="#fcfcfc" /><path d="M6.500 6.500l11 11M17.500 6.500l-11 11" stroke="#40464c" strokeWidth="1.600" /></Svg></BareButton>
        </WindowButtons>
      </TitleBar>
      <MenuBar>
        {MENU.map(([a, b, c]) => <MenuItem key={a + b + c}>{a}<u>{b}</u>{c}</MenuItem>)}
      </MenuBar>
      {BARS.map((b, i) => <Bar key={i} items={b} />)}
      <Main>
        <LayersDock />
        <Splitter $w={6} />
        <MapView />
        <Splitter $w={7} />
        <StyleDock />
      </Main>
      <StatusBar>
        <Locator>
          <Svg s={14}><circle cx="10" cy="10" r="8" stroke="#777" strokeWidth="2" /><path d="M16 16l7 7" stroke="#777" strokeWidth="2" /></Svg>
          <input placeholder="Escriba para localizar (Ctrl+K)" aria-label="Localizar" />
        </Locator>
        <Push />
        <StatusGroup>
          <label htmlFor="coord">Coordenada</label>
          <CoordInput id="coord" defaultValue="3986750,6674470" />
          <BareButton aria-label="Seguimiento"><Svg s={16}><path d="M3 5l14 14M2 10l9 10M8 2l13 14" stroke="#333" strokeWidth="3" /><path d="M4 12C2 5 9 1 14 5M19 9c4 6-2 13-8 12M20 3l4-2" stroke={INK} strokeWidth="2" /><circle cx="16" cy="17" r="3" fill="#fff" stroke="#444" /></Svg></BareButton>
        </StatusGroup>
        <StatusGroup $left={14}>
          <label htmlFor="escala">Escala</label>
          <Combo $plain $w={104}>
            <Select id="escala" $small><option>1:3695163</option></Select>
            <DropPart><Caret /></DropPart>
          </Combo>
        </StatusGroup>
        <StatusGroup>
          <Svg s={16}><path d="M6 12V7a6 6 0 0112 0v5" stroke="#666" strokeWidth="2" /><path d="M3 10h18v12H3z" fill="#5d5d5d" /></Svg>
          <StatusGroup $left={3}>
            <label htmlFor="ampl">Amplificador</label>
            <Spin id="ampl" w={99} value="100%" label="Amplificador" />
          </StatusGroup>
        </StatusGroup>
        <StatusGroup $gap={8}>
          <label htmlFor="rot">Rotación</label>
          <Spin id="rot" w={95} value="0,0 °" label="Rotación" />
        </StatusGroup>
        <StatusGroup $left={6}><CheckLabel><Check defaultChecked />Representar</CheckLabel></StatusGroup>
        <StatusGroup $left={14} $gap={3}>
          <BareButton aria-label="Proyección"><Svg s={16}><circle cx="12" cy="12" r="11" fill="#777" /><path d="M1 12h22M12 1v22M4 5c5 4 11 4 16 0M4 19c5-4 11-4 16 0M9 1c-5 7-5 15 0 22M15 1c5 7 5 15 0 22" stroke="#ddd" /></Svg></BareButton>
          <span>EPSG:5345</span>
        </StatusGroup>
        <StatusGroup $left={22}>
          <BareButton aria-label="Mensajes"><Svg s={17}><path d="M12 2c7 0 11 4 11 8.500S20 19 17 19l3 4-9-4C5 19 1 15 1 10.500S5 2 12 2z" fill="#5d5d5d" /><path d="M6 10.500h3M10.500 10.500h3M15 10.500h3" stroke="#fff" strokeWidth="2.500" /></Svg></BareButton>
        </StatusGroup>
      </StatusBar>
    </Window>
  );
}
